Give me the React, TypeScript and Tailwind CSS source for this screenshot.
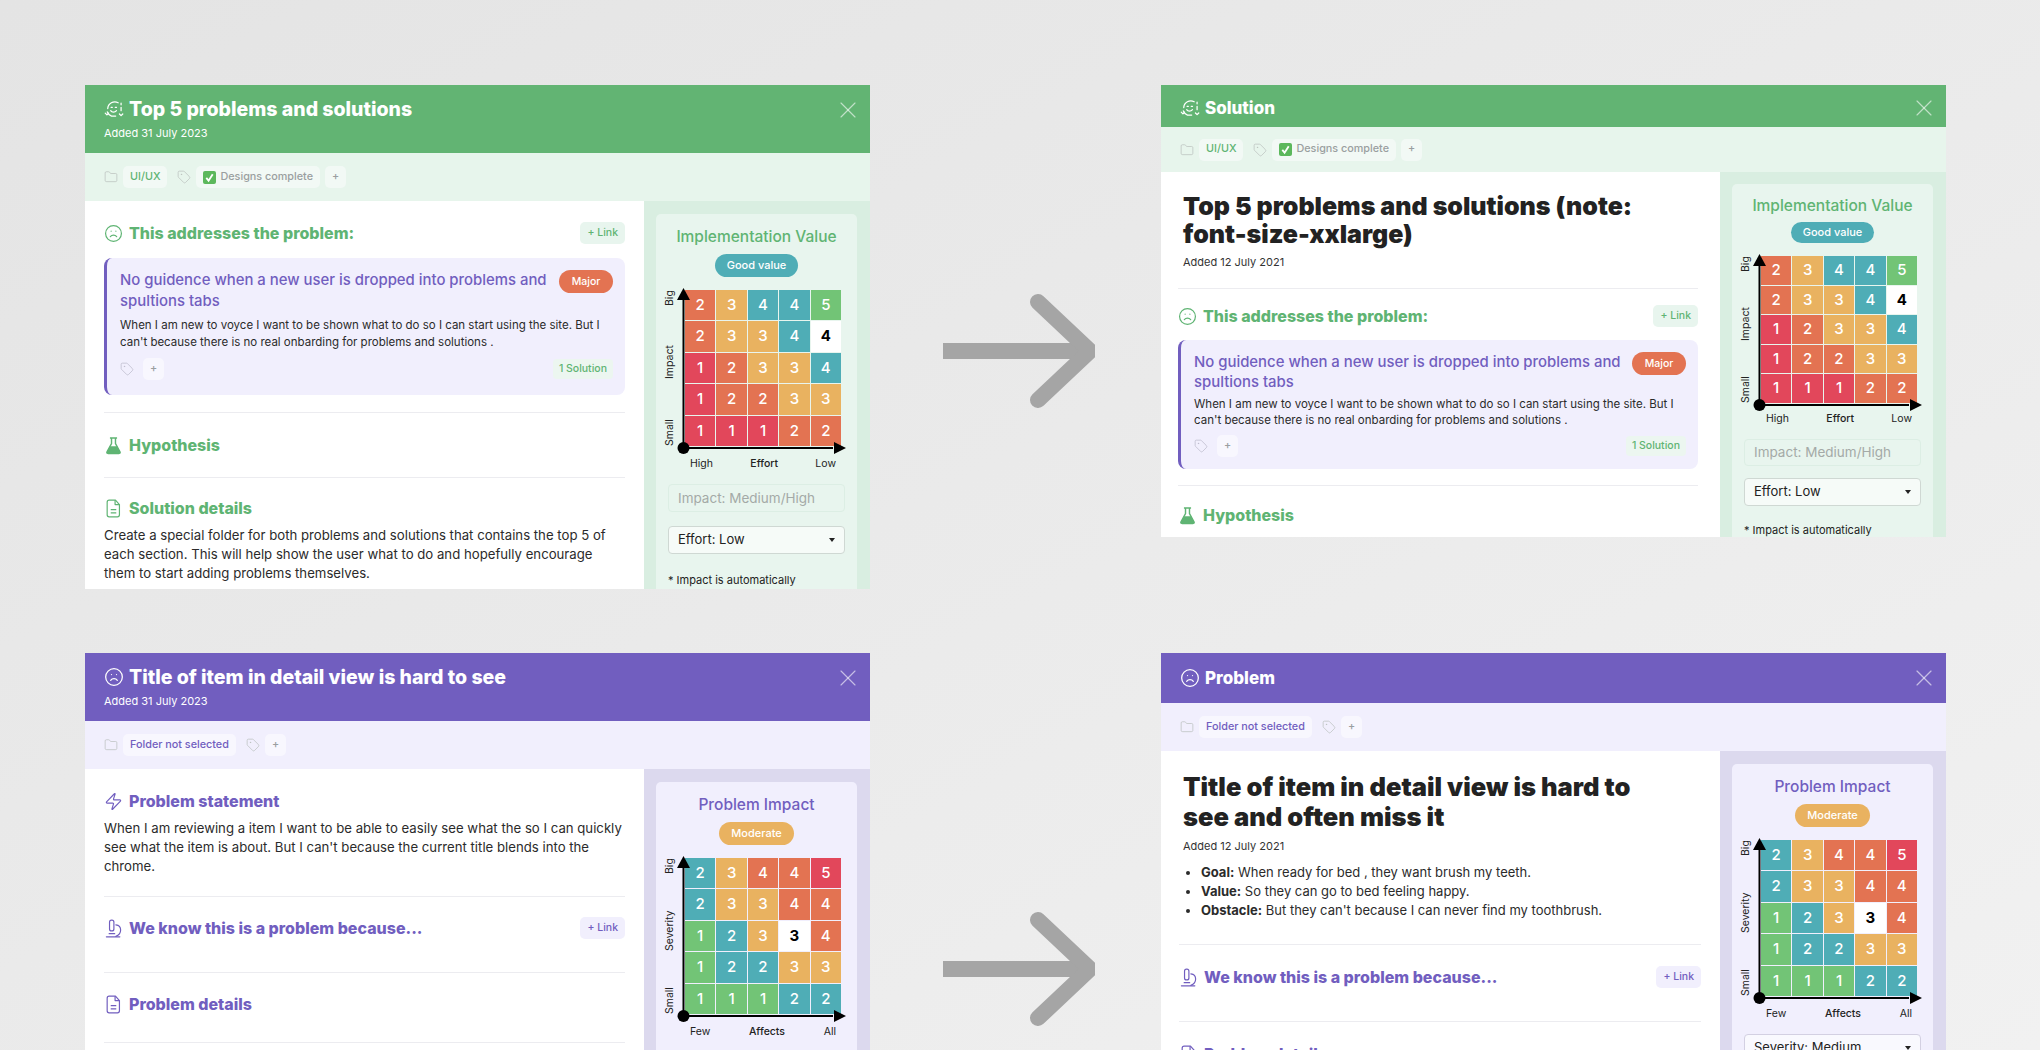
import { Folder, Frown, Tag, X, Zap } from 'lucide-react';
import type { ReactNode } from 'react';

type Tone = 'green' | 'purple';

const tones = {
  green: {
    head: 'bg-[#62b473]',
    sub: 'bg-[#e7f5ec]',
    side: 'bg-[#d9eee1]',
    card: 'bg-[#e8f5ee]',
    text: 'text-[#5fb473]',
    chip: 'bg-[#f2f9f5]',
  },
  purple: {
    head: 'bg-[#715ebf]',
    sub: 'bg-[#f1effd]',
    side: 'bg-[#dcd9ee]',
    card: 'bg-[#f1effd]',
    text: 'text-[#715ebf]',
    chip: 'bg-[#f8f7fe]',
  },
};

const matrix = [
  [2, 3, 4, 4, 5],
  [2, 3, 3, 4, 4],
  [1, 2, 3, 3, 4],
  [1, 2, 2, 3, 3],
  [1, 1, 1, 2, 2],
];

const valueColors: Record<number, string> = {
  1: 'bg-[#e2475b]',
  2: 'bg-[#e37352]',
  3: 'bg-[#e9b260]',
  4: 'bg-[#4fadb6]',
  5: 'bg-[#72c476]',
};

const severityColors: Record<number, string> = {
  1: 'bg-[#72c476]',
  2: 'bg-[#4fadb6]',
  3: 'bg-[#e9b260]',
  4: 'bg-[#e37352]',
  5: 'bg-[#e2475b]',
};

function SolutionIcon({ className }: { className: string }) {
  return (
    <svg className={className} viewBox="0 0 24 24" fill="none" stroke="currentColor" strokeWidth={1.5} strokeLinecap="round" strokeLinejoin="round">
      <path d="M17 4.5A8.5 8.5 0 0 0 4.5 11.5" />
      <path d="M4 15.5c1 2.5 2.5 4 5 5h5" />
      <path d="M8.5 10H10M13.5 10H15" />
      <path d="M8 14c1.500 2.400 5 2.400 7 0" />
      <path d="M20.500 5v2M20.500 10v4M18.500 18l2 2 2-2M1.500 17l2 2 2-2" />
    </svg>
  );
}

function FlaskIcon({ className }: { className: string }) {
  return (
    <svg className={className} viewBox="0 0 24 24">
      <path d="M7.500 2.500h9M9.500 3v6.500L3.800 20c-.5 1 .2 2 1.300 2h13.800c1.100 0 1.800-1 1.300-2L14.500 9.500V3" fill="none" stroke="currentColor" strokeWidth={1.8} />
      <path d="M7.500 13h9l4.300 8v1H3.200v-1Z" fill="currentColor" />
    </svg>
  );
}

function MicroscopeIcon({ className }: { className: string }) {
  return (
    <svg className={className} viewBox="0 0 24 24" fill="none" stroke="currentColor" strokeWidth={1.5} strokeLinecap="round">
      <path d="M3 22.500h17" />
      <rect x={7} y={1.5} width={5.5} height={13.5} rx={2.5} />
      <path d="M6.500 18.500h7" />
      <path d="M15 7.500c4 .5 6 3.200 6 6.300 0 3.700-2.500 6.700-6 8.200" />
    </svg>
  );
}

function DocIcon({ className }: { className: string }) {
  return (
    <svg className={className} viewBox="0 0 24 24" fill="none" stroke="currentColor" strokeWidth={1.5} strokeLinejoin="round">
      <path d="M6.500 1.500h8l5 5.500v13a2.500 2.500 0 0 1-2.500 2.500H6.500A2.500 2.500 0 0 1 4 20V4a2.500 2.500 0 0 1 2.500-2.500Z" />
      <path d="M14 1.500V7h5.500M8.500 13.500h7M8.500 17.500h7" />
    </svg>
  );
}

function CheckEmoji() {
  return (
    <span className="flex h-[13px] w-[13px] items-center justify-center rounded-[2px] bg-[#5cb85c]">
      <svg className="h-[11px] w-[11px] text-white" viewBox="0 0 12 12" fill="none" stroke="currentColor" strokeWidth={2}>
        <path d="M2.500 6.500 5 9.500l4.500-7" />
      </svg>
    </span>
  );
}

function Chip({ tone, children, className = '' }: { tone: Tone; children: ReactNode; className?: string }) {
  return (
    <span className={`flex h-[22px] items-center gap-1 rounded-[5px] px-[7px] text-[10.8px] font-medium ${tones[tone].chip} ${className}`}>
      {children}
    </span>
  );
}

function Header({ tone, icon, title, added }: { tone: Tone; icon: ReactNode; title: string; added?: string }) {
  const small = tone === 'green' ? 'h-[42px] pt-[13px]' : 'h-[50px] pt-[15px]';
  return (
    <div className={`flex items-start justify-between pl-[19px] pr-[8px] text-white ${tones[tone].head} ${added ? 'h-[68px] pt-[12px]' : small}`}>
      <div>
        <div className="flex items-center gap-[5px]">
          {icon}
          <h2 className={`font-extrabold ${added ? 'text-[19.5px] leading-[24px]' : 'text-[17px] leading-[20px]'}`}>{title}</h2>
        </div>
        {added && <p className="mt-[5px] text-[11px] leading-[15px]">{added}</p>}
      </div>
      <X className={`h-[28px] w-[28px] text-white/60 ${added ? 'mt-[-1px]' : 'mt-[-4px]'}`} strokeWidth={1} />
    </div>
  );
}

function SubBar({ tone, tall }: { tone: Tone; tall?: boolean }) {
  return (
    <div className={`flex items-center pl-[19px] ${tones[tone].sub} ${tall ? 'h-[48px]' : 'h-[45px]'}`}>
      <Folder className="h-[14px] w-[14px] text-[#b9bfbc]" strokeWidth={1.2} />
      {tone === 'green' ? (
        <>
          <Chip tone={tone} className={`ml-[5px] ${tones[tone].text}`}>UI/UX</Chip>
          <Tag className="ml-[10px] h-[14px] w-[14px] text-[#b9bfbc]" strokeWidth={1.2} />
          <Chip tone={tone} className="ml-[5px] text-[#9a9fa0]"><CheckEmoji />Designs complete</Chip>
        </>
      ) : (
        <>
          <Chip tone={tone} className={`ml-[5px] ${tones[tone].text}`}>Folder not selected</Chip>
          <Tag className="ml-[10px] h-[14px] w-[14px] text-[#b9bfbc]" strokeWidth={1.2} />
        </>
      )}
      <Chip tone={tone} className="ml-[5px] text-[#9a9fa0]">+</Chip>
    </div>
  );
}

function Heading({ tone, icon, children, link }: { tone: Tone; icon: ReactNode; children: ReactNode; link?: boolean }) {
  return (
    <div className="flex h-[24px] items-center justify-between">
      <div className={`flex items-center gap-[6px] ${tones[tone].text}`}>
        {icon}
        <h3 className="text-[16px] font-extrabold leading-[24px]">{children}</h3>
      </div>
      {link && (
        <span className={`flex h-[22px] items-center rounded-[5px] px-[7px] text-[10.5px] font-medium ${tones[tone].text} ${tone === 'green' ? 'bg-[#e8f5ee]' : 'bg-[#f1effd]'}`}>
          + Link
        </span>
      )}
    </div>
  );
}

function Divider({ className }: { className: string }) {
  return <div className={`h-px bg-[#ececf0] ${className}`} />;
}

function ProblemCard({ compact }: { compact?: boolean }) {
  return (
    <div className={`rounded-[8px] border-l-[3px] border-[#715ebf] bg-[#f1effd] pl-[13px] pr-[12px] ${compact ? 'h-[129px] pt-[12px]' : 'h-[137px] pt-[12px]'}`}>
      <div className="flex items-start justify-between">
        <p className={`w-[436px] text-[14.9px] font-medium text-[#715ebf] ${compact ? 'leading-[20px]' : 'leading-[21px]'}`}>
          No guidence when a new user is dropped into problems and spultions tabs
        </p>
        <span className="flex h-[23px] w-[54px] items-center justify-center rounded-full bg-[#e37352] text-[10.5px] font-medium text-white">Major</span>
      </div>
      <p className={`mt-[5px] text-[11.5px] text-[#2b2b2b] ${compact ? 'leading-[15.5px]' : 'leading-[16.5px]'}`}>
        When I am new to voyce I want to be shown what to do so I can start using the site. But I can't because there is no real onbarding for problems and solutions .
      </p>
      <div className={`flex items-center justify-between ${compact ? 'mt-[7px]' : 'mt-[8px]'}`}>
        <div className="flex items-center gap-[9px]">
          <Tag className="h-[14px] w-[14px] text-[#b9b8c8]" strokeWidth={1.2} />
          <Chip tone="purple" className="text-[#9a9fa0]">+</Chip>
        </div>
        <span className="flex h-[20px] items-center rounded-[4px] bg-[#ecf6f0] px-[6px] text-[10.5px] font-medium text-[#5fb473]">1 Solution</span>
      </div>
    </div>
  );
}

function Axes({ height }: { height: number }) {
  const base = height + 3;
  return (
    <svg className="absolute left-[-9px] top-[-2px] text-black" width={172} height={height + 14} fill="currentColor">
      <rect x={6.5} y={4} width={2} height={base} />
      <rect x={7} y={base} width={150} height={2} />
      <path d="M7.5 0 14 12H1Z" />
      <path d={`M170 ${base + 1} 158 ${base - 5}v12Z`} />
      <circle cx={7.5} cy={base + 1} r={6} />
    </svg>
  );
}

function Sidebar({ tone, compact, title, pill, pillColor, yLabel, xLabels, highlight, fields }: {
  tone: Tone;
  compact?: boolean;
  title: string;
  pill: string;
  pillColor: string;
  yLabel: string;
  xLabels: string[];
  highlight: [number, number];
  fields: ReactNode;
}) {
  const colors = tone === 'green' ? valueColors : severityColors;
  const rowHeight = compact ? 'h-[28.6px]' : 'h-[30.4px]';
  const gridHeight = compact ? 147 : 156;
  return (
    <div className={`w-[226px] shrink-0 self-stretch px-[12px] ${compact ? 'pt-[12px]' : 'pt-[13px]'} ${tones[tone].side}`}>
      <div className={`h-[500px] w-[201px] rounded-[5px] ${compact ? 'pt-[12px]' : 'pt-[13px]'} ${tones[tone].card}`}>
        <h4 className={`text-center text-[15.5px] font-medium leading-[20px] ${tones[tone].text}`}>{title}</h4>
        <div className={`flex justify-center ${compact ? 'mt-[6px]' : 'mt-[7px]'}`}>
          <span className={`flex items-center rounded-full px-[12px] text-[11px] font-medium text-white ${pillColor} ${compact ? 'h-[21px]' : 'h-[23px]'}`}>{pill}</span>
        </div>
        <div className="ml-[7px] mt-[13px] flex">
          <div className="flex w-[14px] rotate-180 items-center justify-between py-[5px] text-[10.5px] text-[#222] [writing-mode:vertical-rl]" style={{ height: gridHeight }}>
            <span>Small</span>
            <span>{yLabel}</span>
            <span>Big</span>
          </div>
          <div className="relative ml-[8px] w-[156px]">
            <div className="grid grid-cols-5 gap-px">
              {matrix.flatMap((row, r) =>
                row.map((v, c) => {
                  const on = highlight[0] === r && highlight[1] === c;
                  return (
                    <div key={`${r}-${c}`} className={`flex items-center justify-center text-[15px] ${rowHeight} ${on ? 'bg-white font-bold text-black' : `${colors[v]} font-medium text-white`}`}>
                      {v}
                    </div>
                  );
                }),
              )}
            </div>
            <Axes height={gridHeight} />
          </div>
        </div>
        <div className={`ml-[34px] flex w-[146px] justify-between text-[10.5px] text-[#222] ${compact ? 'mt-[8px]' : 'mt-[10px]'}`}>
          {xLabels.map((l, i) => (
            <span key={l} className={i === 1 ? 'font-medium' : ''}>{l}</span>
          ))}
        </div>
        <div className="mt-[12px] px-[12px]">{fields}</div>
      </div>
    </div>
  );
}

function ImplementationFields({ compact }: { compact?: boolean }) {
  return (
    <>
      <div className={`flex items-center rounded-[4px] border border-[#dceee4] px-[9px] text-[13.5px] text-[#a4aaa7] ${compact ? 'h-[27px]' : 'h-[28px]'}`}>Impact: Medium/High</div>
      <div className={`flex items-center justify-between rounded-[4px] border border-[#cfd8d3] bg-white/60 px-[9px] text-[13px] text-[#222] ${compact ? 'mt-[12px] h-[28px]' : 'mt-[14px] h-[28px]'}`}>
        Effort: Low
        <span className="h-0 w-0 border-x-[3.5px] border-t-[4px] border-x-transparent border-t-[#222]" />
      </div>
      <p className={`${compact ? 'mt-[17px]' : 'mt-[19px]'} text-[11px] leading-[15px] text-[#222]`}>* Impact is automatically</p>
    </>
  );
}

function SeverityFields() {
  return (
    <div className="flex h-[28px] items-center justify-between rounded-[4px] border border-[#d3d0e2] bg-white/60 px-[9px] text-[13px] text-[#222]">
      Severity: Medium
      <span className="h-0 w-0 border-x-[3.5px] border-t-[4px] border-x-transparent border-t-[#222]" />
    </div>
  );
}

function Arrow({ className }: { className: string }) {
  return (
    <svg className={`text-[#a5a5a5] ${className}`} width={152} height={114} viewBox="0 0 152 114" fill="none" stroke="currentColor">
      <path d="M0 57h146" strokeWidth={16} />
      <path d="M95 8l52 49-52 49" strokeWidth={16} strokeLinecap="round" strokeLinejoin="round" />
    </svg>
  );
}

const greenIcon = <SolutionIcon className="h-[20px] w-[20px]" />;
const frownHead = <Frown className="h-[20px] w-[20px]" strokeWidth={1.5} />;
const frownSmall = <Frown className="h-[19px] w-[19px]" strokeWidth={1.5} />;
const flask = <FlaskIcon className="h-[19px] w-[19px]" />;
const file = <DocIcon className="h-[19px] w-[19px]" />;
const scope = <MicroscopeIcon className="h-[19px] w-[19px]" />;
const greenX = ['High', 'Effort', 'Low'];
const purpleX = ['Few', 'Affects', 'All'];

export default function App() {
  return (
    <div className="h-[1050px] overflow-hidden bg-gradient-to-br from-[#e4e4e4] to-[#f1f1f1] pl-[85px] pt-[85px] font-['Inter','Noto_Sans',sans-serif]">
      <div className="grid h-[568px] grid-cols-[785px_291px_785px] items-start">
        <section className="flex h-[504px] flex-col overflow-hidden bg-white">
          <Header tone="green" icon={greenIcon} title="Top 5 problems and solutions" added="Added 31 July 2023" />
          <SubBar tone="green" tall />
          <div className="flex min-h-0 flex-1">
            <div className="w-[559px] shrink-0 px-[19px] pt-[20px]">
              <Heading tone="green" icon={frownSmall} link>This addresses the problem:</Heading>
              <div className="mt-[13px]"><ProblemCard /></div>
              <Divider className="mt-[17px]" />
              <div className="mt-[20px]"><Heading tone="green" icon={flask}>Hypothesis</Heading></div>
              <Divider className="mt-[20px]" />
              <div className="mt-[18px]"><Heading tone="green" icon={file}>Solution details</Heading></div>
              <p className="mt-[6px] text-[13.2px] leading-[19px] text-[#2b2b2b]">
                Create a special folder for both problems and solutions that contains the top 5 of each section. This will help show the user what to do and hopefully encourage them to start adding problems themselves.
              </p>
            </div>
            <Sidebar tone="green" title="Implementation Value" pill="Good value" pillColor="bg-[#4fadb6]" yLabel="Impact" xLabels={greenX} highlight={[1, 4]} fields={<ImplementationFields />} />
          </div>
        </section>
        <Arrow className="ml-[73px] mt-[209px]" />
        <section className="flex h-[452px] flex-col overflow-hidden bg-white">
          <Header tone="green" icon={greenIcon} title="Solution" />
          <SubBar tone="green" />
          <div className="flex min-h-0 flex-1">
            <div className="w-[559px] shrink-0 pl-[17px] pr-[22px] pt-[20px]">
              <h1 className="w-[490px] pl-[5px] text-[25px] font-black leading-[28px] text-[#222]">Top 5 problems and solutions (note: font-size-xxlarge)</h1>
              <p className="mt-[6px] pl-[5px] text-[11px] leading-[16px] text-[#333]">Added 12 July 2021</p>
              <Divider className="mt-[18px]" />
              <div className="mt-[15px]"><Heading tone="green" icon={frownSmall} link>This addresses the problem:</Heading></div>
              <div className="mt-[12px]"><ProblemCard compact /></div>
              <Divider className="mt-[16px]" />
              <div className="mt-[17px]"><Heading tone="green" icon={flask}>Hypothesis</Heading></div>
            </div>
            <Sidebar tone="green" compact title="Implementation Value" pill="Good value" pillColor="bg-[#4fadb6]" yLabel="Impact" xLabels={greenX} highlight={[1, 4]} fields={<ImplementationFields compact />} />
          </div>
        </section>
      </div>
      <div className="grid grid-cols-[785px_291px_785px] items-start">
        <section className="flex h-[397px] flex-col overflow-hidden bg-white">
          <Header tone="purple" icon={frownHead} title="Title of item in detail view is hard to see" added="Added 31 July 2023" />
          <SubBar tone="purple" tall />
          <div className="flex min-h-0 flex-1">
            <div className="w-[559px] shrink-0 px-[19px] pt-[20px]">
              <Heading tone="purple" icon={<Zap className="h-[19px] w-[19px]" strokeWidth={1.5} />}>Problem statement</Heading>
              <p className="mt-[6px] text-[13.2px] leading-[19px] text-[#2b2b2b]">
                When I am reviewing a item I want to be able to easily see what the so I can quickly see what the item is about. But I can't because the current title blends into the chrome.
              </p>
              <Divider className="mt-[20px]" />
              <div className="mt-[19px]"><Heading tone="purple" icon={scope} link>We know this is a problem because...</Heading></div>
              <Divider className="mt-[32px]" />
              <div className="mt-[19px]"><Heading tone="purple" icon={file}>Problem details</Heading></div>
              <Divider className="mt-[26px]" />
            </div>
            <Sidebar tone="purple" title="Problem Impact" pill="Moderate" pillColor="bg-[#e9b260]" yLabel="Severity" xLabels={purpleX} highlight={[2, 3]} fields={<SeverityFields />} />
          </div>
        </section>
        <Arrow className="ml-[73px] mt-[259px]" />
        <section className="flex h-[397px] flex-col overflow-hidden bg-white">
          <Header tone="purple" icon={frownHead} title="Problem" />
          <SubBar tone="purple" tall />
          <div className="flex min-h-0 flex-1">
            <div className="w-[559px] shrink-0 pl-[18px] pr-[19px] pt-[21px]">
              <h1 className="w-[500px] pl-[4px] text-[25.5px] font-black leading-[30px] text-[#222]">Title of item in detail view is hard to see and often miss it</h1>
              <p className="mt-[6px] pl-[4px] text-[11px] leading-[16px] text-[#333]">Added 12 July 2021</p>
              <ul className="mt-[9px] list-disc pl-[22px] text-[13px] leading-[19px] text-[#2b2b2b]">
                <li><b>Goal:</b> When ready for bed , they want brush my teeth.</li>
                <li><b>Value:</b> So they can go to bed feeling happy.</li>
                <li><b>Obstacle:</b> But they can't because I can never find my toothbrush.</li>
              </ul>
              <Divider className="mt-[24px]" />
              <div className="mt-[20px]"><Heading tone="purple" icon={scope} link>We know this is a problem because...</Heading></div>
              <Divider className="mt-[32px]" />
              <div className="mt-[20px]"><Heading tone="purple" icon={file}>Problem details</Heading></div>
            </div>
            <Sidebar tone="purple" title="Problem Impact" pill="Moderate" pillColor="bg-[#e9b260]" yLabel="Severity" xLabels={purpleX} highlight={[2, 3]} fields={<SeverityFields />} />
          </div>
        </section>
      </div>
    </div>
  );
}
